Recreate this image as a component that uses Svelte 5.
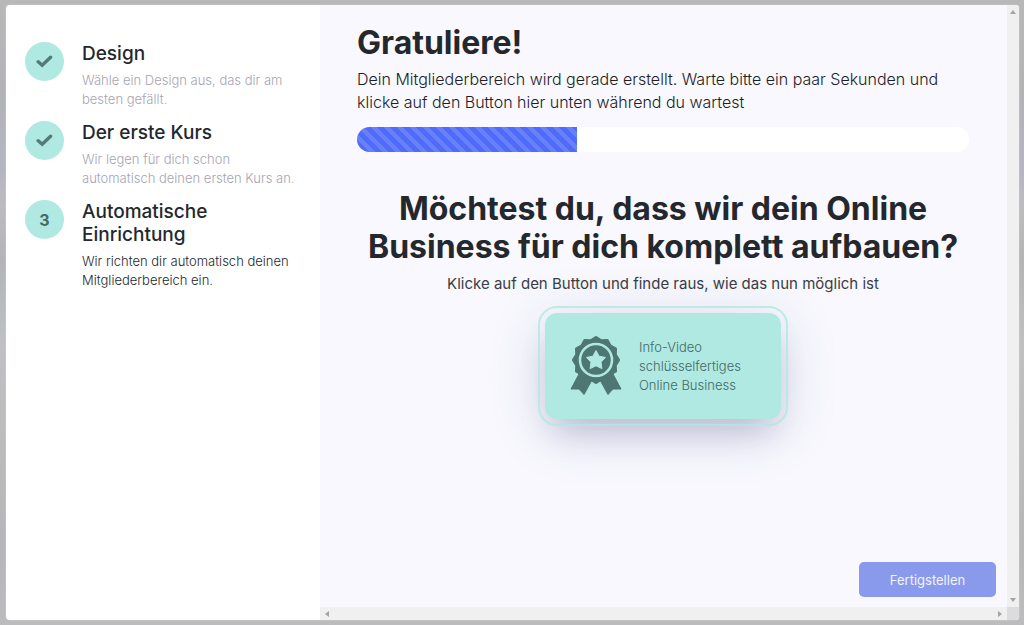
<script>
  let progress = $state(36)

  const steps = [
    { title: 'Design', text: 'Wähle ein Design aus, das dir am besten gefällt.', done: true },
    { title: 'Der erste Kurs', text: 'Wir legen für dich schon automatisch deinen ersten Kurs an.', done: true },
    { title: 'Automatische Einrichtung', text: 'Wir richten dir automatisch deinen Mitgliederbereich ein.', done: false }
  ]

  function star(cx, cy, points, outer, inner) {
    return Array.from({ length: points * 2 }, (_, i) => {
      const r = i % 2 ? inner : outer
      const a = (Math.PI * i) / points - Math.PI / 2
      return `${(cx + r * Math.cos(a)).toFixed(2)},${(cy + r * Math.sin(a)).toFixed(2)}`
    }).join(' ')
  }
</script>

<div class="backdrop">
  <div class="modal">
    <aside class="sidebar">
      <ol class="steps">
        {#each steps as step, i}
          <li class="step" class:done={step.done}>
            <span class="step-icon">
              {#if step.done}
                <svg width="17" height="13" viewBox="0 0 17 13" fill="none" stroke="#547b77" stroke-width="3.4" stroke-linecap="round" stroke-linejoin="miter"><path d="M2.2 6.7 L6.2 10.2 L14.6 2.2"/></svg>
              {:else}
                {i + 1}
              {/if}
            </span>
            <div>
              <h3 class="step-title">{step.title}</h3>
              <p class="step-text">{step.text}</p>
            </div>
          </li>
        {/each}
      </ol>
    </aside>

    <div class="pane">
      <main class="content">
        <h1>Gratuliere!</h1>
        <p class="lead">Dein Mitgliederbereich wird gerade erstellt. Warte bitte ein paar Sekunden und klicke auf den Button hier unten während du wartest</p>
        <div class="progress" role="progressbar" aria-label="Einrichtung" aria-valuenow={progress} aria-valuemin="0" aria-valuemax="100">
          <div class="bar" style="width: {progress}%"></div>
        </div>

        <section class="offer">
          <h2>Möchtest du, dass wir dein Online Business für dich komplett aufbauen?</h2>
          <p class="hint">Klicke auf den Button und finde raus, wie das nun möglich ist</p>
          <button class="video-btn" type="button">
            <svg class="award" width="52" height="60" viewBox="0 0 52 60">
              <g fill="#4e7672" stroke="#4e7672" stroke-linejoin="round">
                <path stroke-width="1" d="M9 38 L1 53 L9 53 L14 58.500 L22.500 43 Z"/>
                <path stroke-width="1" d="M43 38 L51 53 L43 53 L38 58.500 L29.500 43 Z"/>
                <polygon stroke-width="3" points={star(26, 24, 12, 22.500, 20)}/>
              </g>
              <circle cx="26" cy="24" r="16" fill="none" stroke="#b0e8e2" stroke-width="2.600"/>
              <polygon points={star(26, 24.5, 5, 10, 5.3)} fill="#b0e8e2" stroke="#b0e8e2" stroke-width="1" stroke-linejoin="round"/>
            </svg>
            <span class="video-text">Info-Video schlüsselfertiges Online Business</span>
          </button>
        </section>

        <div class="footer">
          <button class="finish-btn" type="button">Fertigstellen</button>
        </div>
      </main>

      <div class="track vertical" aria-hidden="true">
        <svg width="6" height="4" viewBox="0 0 6 4"><path d="M0 4 L3 0 L6 4 Z" fill="#a3a3a3"/></svg>
        <svg width="6" height="4" viewBox="0 0 6 4"><path d="M0 0 L3 4 L6 0 Z" fill="#a3a3a3"/></svg>
      </div>
      <div class="track horizontal" aria-hidden="true">
        <svg width="4" height="6" viewBox="0 0 4 6"><path d="M4 0 L0 3 L4 6 Z" fill="#a3a3a3"/></svg>
        <svg width="4" height="6" viewBox="0 0 4 6"><path d="M0 0 L4 3 L0 6 Z" fill="#a3a3a3"/></svg>
      </div>
      <div class="corner"></div>
    </div>
  </div>
</div>

<style>
  :global(body) { font-family: Inter, "Liberation Sans", sans-serif; color: #24282d; }
  h1, h2, h3, p, ol { margin: 0; padding: 0; }
  button { font-family: inherit; border: none; cursor: pointer; }

  .backdrop { box-sizing: border-box; min-height: 100vh; padding: 5px; padding-left: 6px; display: flex; background: linear-gradient(180deg, #b8b8b9, #b2b3b5 15%, #b5b5c2 27%, #bcbcbe 33%, #b3b4b5 42%, #bfc0c2 55%, #bbbabb 75%, #b5b6b8 87%, #bcbcbe); }
  .modal { flex: 1; display: grid; grid-template-columns: 31% 1fr; background: #fff; border-radius: 4px; overflow: hidden; box-shadow: 0 0 2px #d5d5d5; }

  .sidebar { padding: 37px 16px 24px 19px; }
  .steps { list-style: none; display: flex; flex-direction: column; gap: 12px; }
  .step { display: flex; align-items: flex-start; gap: 18px; }
  .step-icon { flex: none; width: 39px; height: 39px; border-radius: 50%; background: #b0e8e2; color: #466b67; display: flex; align-items: center; justify-content: center; font-size: 16px; font-weight: 700; }
  .step-title { font-size: 19px; line-height: 23px; font-weight: 500; margin-bottom: 6px; }
  .step-text { font-size: 13px; line-height: 19px; font-weight: 300; color: #24282d; }
  .done .step-text { color: #a5a4b3; }

  .pane { display: grid; grid-template-columns: 1fr 12px; grid-template-rows: 1fr 13px; background: #f8f8fe; }
  .content { display: flex; flex-direction: column; padding: 19px 38px 10px 37px; }
  h1, h2 { font-size: 32px; line-height: 38px; font-weight: 650; }
  h1 { margin-bottom: 6px; }
  .lead { font-size: 16px; line-height: 23px; font-weight: 300; color: #1c2024; }
  .hint { font-size: 15px; line-height: 23px; font-weight: 400; color: #3a3e43; }
  .progress { height: 25px; margin-top: 13px; border-radius: 13px; background: #fff; overflow: hidden; }
  .bar { height: 100%; background: linear-gradient(45deg, rgba(255, 255, 255, 0.15) 25%, transparent 25%, transparent 50%, rgba(255, 255, 255, 0.15) 50%, rgba(255, 255, 255, 0.15) 75%, transparent 75%) 0 0 / 13px 13px #4e6bfa; }

  .offer { margin-top: 38px; display: flex; flex-direction: column; align-items: center; text-align: center; }
  h2 { margin-bottom: 6px; }
  .video-btn { box-sizing: border-box; width: 236px; height: 106px; margin-top: 18px; padding: 0 25px; display: flex; align-items: center; gap: 17px; border-radius: 12px; background: #b0e8e2; outline: 2px solid rgba(176, 232, 226, 0.8); outline-offset: 5px; box-shadow: 0 20px 32px -8px rgba(45, 50, 110, 0.22), 0 10px 60px rgba(45, 50, 120, 0.16); }
  .award { flex: none; }
  .video-text { font-size: 13px; line-height: 19px; font-weight: 300; text-align: left; color: #426a66; }

  .footer { margin-top: auto; margin-right: -27px; display: flex; justify-content: flex-end; }
  .finish-btn { width: 137px; height: 35px; border-radius: 5px; background: #8999ec; color: #f1f3ff; font-size: 13px; }

  .track { display: flex; justify-content: space-between; align-items: center; background: #f0f0f0; }
  .vertical { flex-direction: column; padding: 5px 0; }
  .horizontal { padding: 0 5px; }
  .corner { background: #dcdcdc; }
</style>
